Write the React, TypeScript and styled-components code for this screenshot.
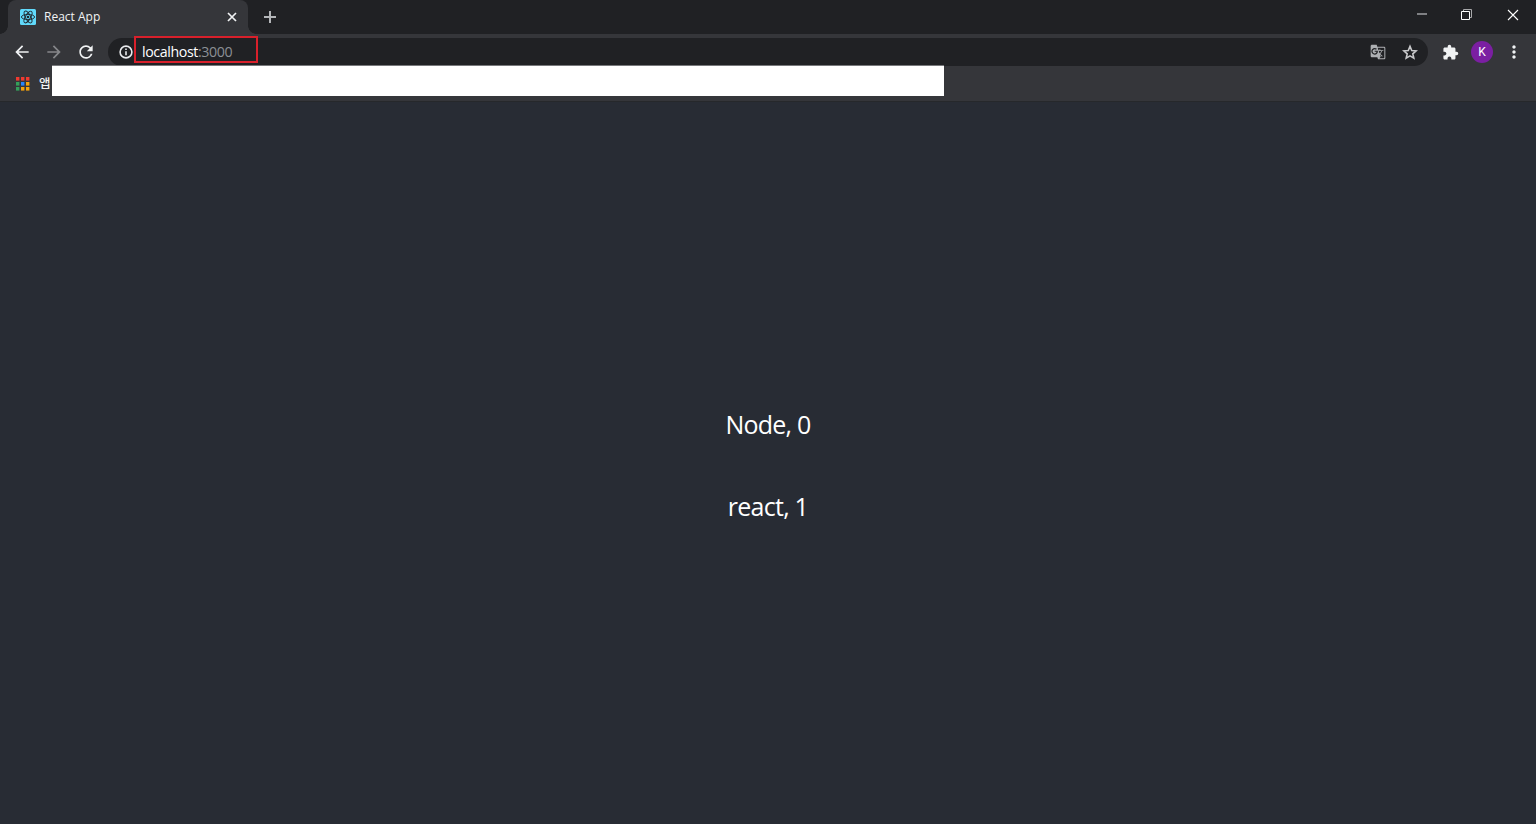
import styled, { createGlobalStyle } from "styled-components";
import {
    MdArrowBack,
    MdArrowForward,
    MdExtension,
    MdGTranslate,
    MdMoreVert,
    MdRefresh,
} from "react-icons/md";

const GlobalStyle = createGlobalStyle`
    * {
        box-sizing: border-box;
    }

    body {
        margin: 0;
        font-family: "Open Sans", "Noto Sans", "Noto Sans CJK KR", sans-serif;
    }
`;

const Window = styled.div`
    display: flex;
    flex-direction: column;
    height: 100vh;
    overflow: hidden;
    background-color: #282c34;
`;

const TabStrip = styled.div`
    display: flex;
    height: 34px;
    padding-left: 8px;
    background-color: #202124;
`;

const Tab = styled.div`
    position: relative;
    display: flex;
    align-items: center;
    width: 240px;
    height: 34px;
    padding: 0 11px 0 12px;
    border-radius: 8px 8px 0 0;
    background-color: #35363a;

    &::before,
    &::after {
        content: "";
        position: absolute;
        bottom: 0;
        width: 8px;
        height: 8px;
    }
    &::before {
        left: -8px;
        background: radial-gradient(circle at 0 0, transparent 7.5px, #35363a 8px);
    }
    &::after {
        right: -8px;
        background: radial-gradient(circle at 100% 0, transparent 7.5px, #35363a 8px);
    }
`;

const TabTitle = styled.span`
    flex: 1;
    margin-left: 8px;
    color: #f1f3f4;
    font-size: 12px;
    line-height: 16px;
`;

const NewTab = styled.div`
    display: flex;
    align-items: center;
    margin-left: 15px;
`;

const WindowControls = styled.div`
    display: flex;
    gap: 34px;
    margin-left: auto;
    padding: 9px 17px 0 0;
`;

const Toolbar = styled.div`
    display: flex;
    align-items: flex-start;
    height: 32px;
    padding: 4px 6px 0;
    background-color: #35363a;
`;

const ToolIcon = styled.div<{ $dim?: boolean }>`
    display: flex;
    align-items: center;
    justify-content: center;
    flex-shrink: 0;
    width: 32px;
    height: 28px;
    color: ${({ $dim }) => ($dim ? "#86878a" : "#f1f3f4")};
`;

const Omnibox = styled.div`
    display: flex;
    align-items: center;
    flex: 1;
    height: 28px;
    margin: 0 6px;
    padding: 0 2px 0 10px;
    border-radius: 14px;
    background-color: #202124;
    color: #c8c9cb;
`;

const UrlHighlight = styled.div`
    width: 124px;
    height: 27px;
    margin: -5px auto 0 0;
    padding: 4px 0 0 6px;
    border: 2px solid #d8202b;
    color: #ffffff;
    font-size: 14.2px;
    letter-spacing: -0.38px;
    line-height: 20px;
    white-space: nowrap;
`;

const Port = styled.span`
    color: #8c9095;
`;

const Avatar = styled.div`
    display: flex;
    align-items: center;
    justify-content: center;
    width: 22px;
    height: 22px;
    border-radius: 50%;
    background-color: #7b1fa2;
    color: #ffffff;
    font-family: Roboto, sans-serif;
    font-size: 12px;
`;

const BookmarksBar = styled.div`
    display: flex;
    height: 36px;
    padding-left: 16px;
    border-bottom: 1px solid #26282b;
    background-color: #35363a;
`;

const AppsIcon = styled.svg`
    width: 14px;
    height: 14px;
    margin-top: 11px;
`;

const AppsLabel = styled.span`
    width: 13px;
    margin-left: 9px;
    color: #f1f3f4;
    font-family: "Noto Sans CJK KR", sans-serif;
    font-size: 12.5px;
    font-weight: 500;
    line-height: 34px;
`;

const BlankPanel = styled.div`
    width: 892px;
    height: 31px;
    margin-top: -1px;
    border-top: 1px solid #77787b;
    background-color: #ffffff;
`;

const Content = styled.main`
    display: flex;
    flex: 1;
    flex-direction: column;
    align-items: center;
    justify-content: center;
    gap: 46px;
    padding-top: 4px;
    color: #ffffff;
    font-size: 25px;
    letter-spacing: -0.75px;
    line-height: 36px;
`;

const Item = styled.p`
    margin: 0;
`;

const APP_COLORS = [
    "#f03a30", "#f03a30", "#f03a30",
    "#34a05a", "#2684fc", "#f5a30a",
    "#34a05a", "#f5a30a", "#f5a30a",
];

const items = ["Node", "react"];

function ReactLogo() {
    return (
        <svg width="16" height="16" viewBox="0 0 16 16">
            <rect width="16" height="16" rx="1.5" fill="#61dafb" />
            <g fill="none" stroke="#20272e" strokeWidth="0.9">
                <ellipse cx="8" cy="8" rx="6.6" ry="2.6" />
                <ellipse cx="8" cy="8" rx="6.6" ry="2.6" transform="rotate(60 8 8)" />
                <ellipse cx="8" cy="8" rx="6.6" ry="2.6" transform="rotate(120 8 8)" />
            </g>
            <circle cx="8" cy="8" r="1.3" fill="#20272e" />
        </svg>
    );
}

function InfoIcon() {
    return (
        <svg width="16" height="16" viewBox="0 0 16 16" fill="none" stroke="#e8eaed" strokeWidth="1.6">
            <circle cx="8" cy="8" r="5.9" />
            <path d="M8 7.2v4M8 4.6v1.5" />
        </svg>
    );
}

function StarIcon() {
    return (
        <svg width="16" height="16" viewBox="0 0 24 24" fill="none" stroke="#c8c9cb" strokeWidth="2.4">
            <path d="M12 3.6l2.6 6.1 6.6.6-5 4.4 1.5 6.5-5.7-3.4-5.7 3.4 1.5-6.5-5-4.4 6.6-.6z" />
        </svg>
    );
}

export default function App() {
    return (
        <Window>
            <GlobalStyle />
            <TabStrip>
                <Tab>
                    <ReactLogo />
                    <TabTitle>React App</TabTitle>
                    <svg width="10" height="10" viewBox="0 0 10 10" stroke="#f1f3f4" strokeWidth="1.7">
                        <path d="M1 1l8 8M9 1l-8 8" />
                    </svg>
                </Tab>
                <NewTab>
                    <svg width="14" height="14" viewBox="0 0 14 14" stroke="#b4b6b9" strokeWidth="2">
                        <path d="M7 1v12M1 7h12" />
                    </svg>
                </NewTab>
                <WindowControls>
                    <svg width="12" height="12" viewBox="0 0 12 12">
                        <path d="M2 5h10" stroke="#7f8083" strokeWidth="2" />
                    </svg>
                    <svg width="12" height="12" viewBox="0 0 12 12" fill="none">
                        <path d="M2.5 2.5v-2h8v8h-2" stroke="#a8a9ab" />
                        <path d="M.5 2.5h8v8h-8z" stroke="#ffffff" />
                    </svg>
                    <svg width="12" height="12" viewBox="0 0 12 12" stroke="#ffffff" strokeWidth="1.1">
                        <path d="M1 1l10 10M11 1L1 11" />
                    </svg>
                </WindowControls>
            </TabStrip>
            <Toolbar>
                <ToolIcon><MdArrowBack size={20} /></ToolIcon>
                <ToolIcon $dim><MdArrowForward size={20} /></ToolIcon>
                <ToolIcon><MdRefresh size={20} /></ToolIcon>
                <Omnibox>
                    <InfoIcon />
                    <UrlHighlight>localhost<Port>:3000</Port></UrlHighlight>
                    <ToolIcon><MdGTranslate size={16} color="#aeb0b3" /></ToolIcon>
                    <ToolIcon><StarIcon /></ToolIcon>
                </Omnibox>
                <ToolIcon><MdExtension size={17} /></ToolIcon>
                <ToolIcon><Avatar>K</Avatar></ToolIcon>
                <ToolIcon><MdMoreVert size={20} /></ToolIcon>
            </Toolbar>
            <BookmarksBar>
                <AppsIcon viewBox="0 0 14 14">
                    {APP_COLORS.map((color, i) => (
                        <rect key={i} x={(i % 3) * 5} y={Math.floor(i / 3) * 5} width="3.4" height="3.6" fill={color} />
                    ))}
                </AppsIcon>
                <AppsLabel>앱</AppsLabel>
                <BlankPanel />
            </BookmarksBar>
            <Content>
                {items.map((name, i) => <Item key={name}>{name}, {i}</Item>)}
            </Content>
        </Window>
    );
}
